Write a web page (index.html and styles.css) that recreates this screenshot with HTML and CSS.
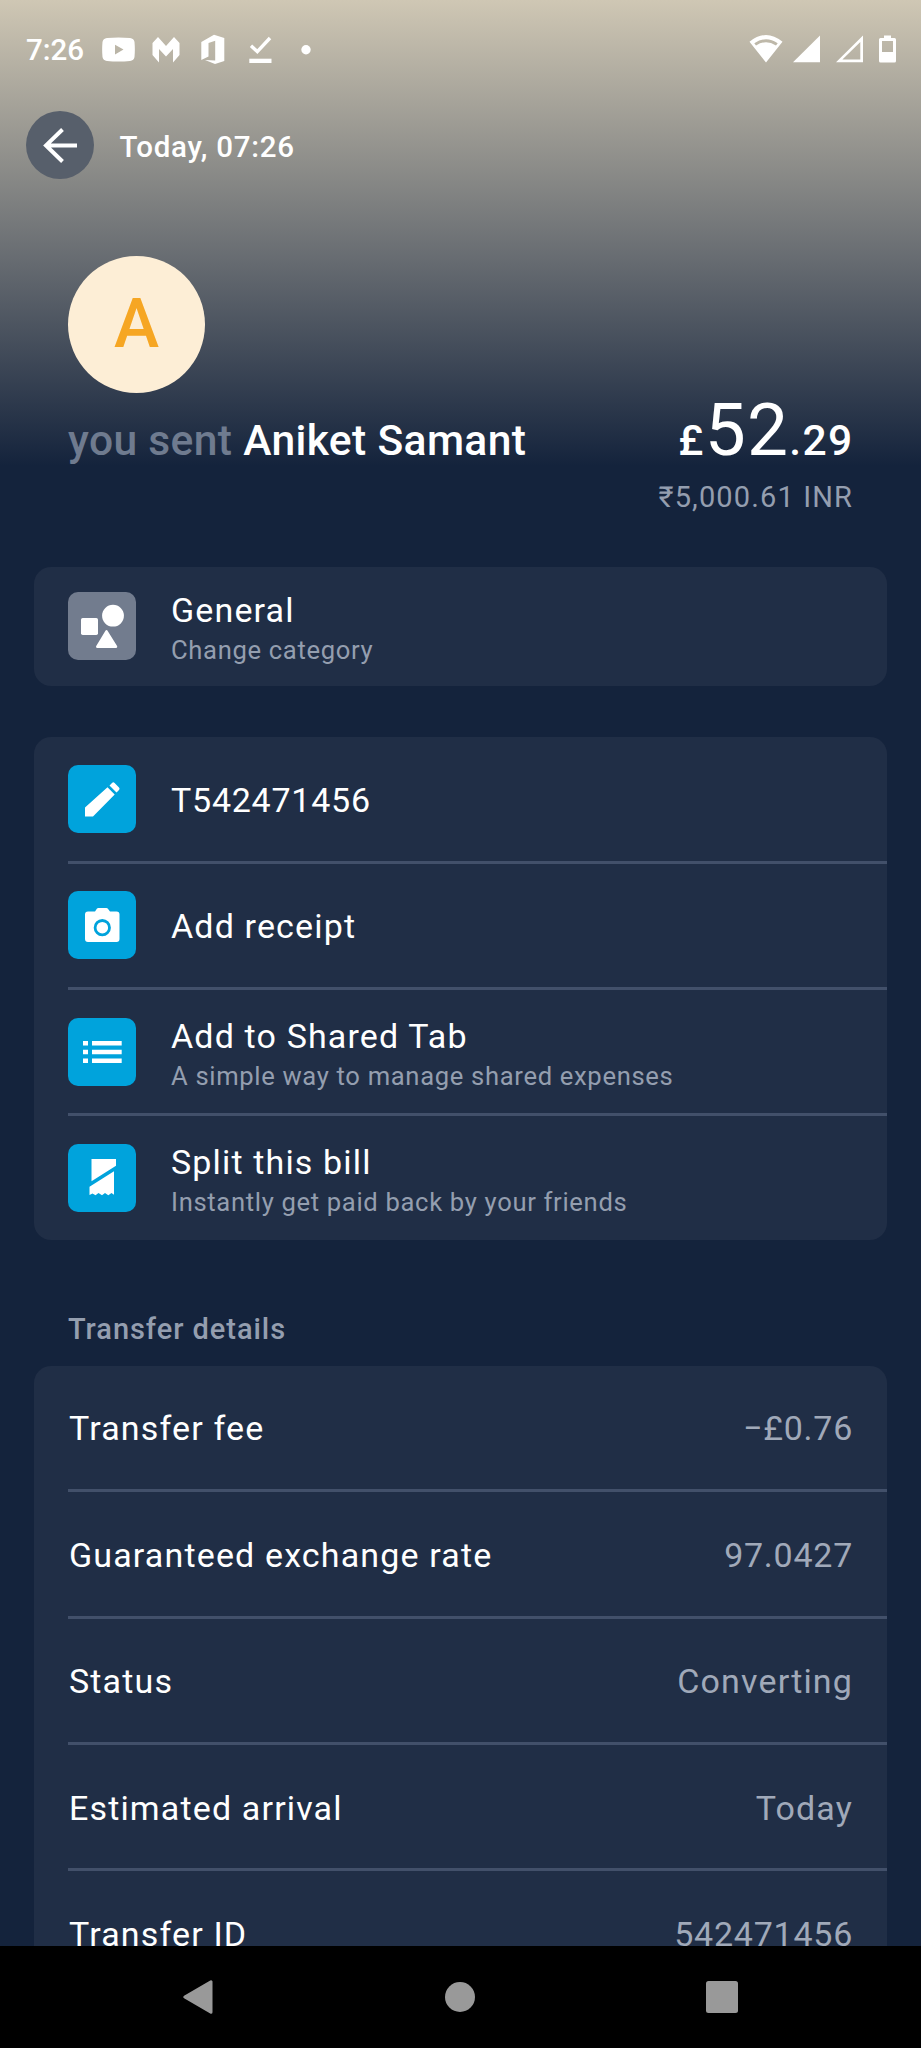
FILE: index.html
```html
<!DOCTYPE html>
<html lang="en">
<head>
<meta charset="utf-8">
<title>Transfer</title>
<link rel="stylesheet" href="styles.css">
</head>
<body>
<div class="screen">
  <main class="content">
    <div class="statusbar">
      <span class="clock">7:26</span>
      <svg class="st-youtube" width="33" height="34" viewBox="0 0 33 34"><path fill="#fff" fill-rule="evenodd" d="M5 5Q16.500 4 28 5Q32 5.500 32.500 9Q33.200 16.500 32.500 24Q32 27.500 28 28Q16.500 29 5 28Q1 27.500 .5 24Q-.2 16.500 .5 9Q1 5.500 5 5ZM13 11.800V21.500L21.500 16.600Z"/></svg>
      <svg class="st-m" width="28" height="34" viewBox="0 0 28 34"><path fill="#fff" d="M6 4L14 13L22 4L27.500 10V22L21 29.500V16L14 23.500L7 16V29.500L.5 22V10Z"/></svg>
      <svg class="st-office" width="24" height="34" viewBox="0 0 24 34"><path fill="#fff" d="M.3 9L13 1.800L23.300 5V28L14 31L4 27L14.200 27.500V7.800L7.500 10V23.500L.3 27Z"/></svg>
      <svg class="st-check" width="23" height="34" viewBox="0 0 23 34"><path fill="none" stroke="#fff" stroke-width="3.400" d="M2 12.800L8.300 18.600L21 5"/><path fill="#fff" d="M.3 25.700H22.500V30H.3Z"/></svg>
      <svg class="st-dot" width="10" height="34" viewBox="0 0 10 34"><circle cx="5" cy="16.700" r="4.700" fill="#fff"/></svg>
      <svg class="st-wifi" width="34" height="34" viewBox="0 0 34 34"><path fill="#fff" fill-rule="evenodd" d="M.5 8.800Q17-4.800 33.500 8.800L17 29.500ZM5.300 10.200L7 12.500Q17 5.800 27 12.500L28.700 10.200Q17 2.200 5.300 10.200Z"/></svg>
      <svg class="st-sig" width="27" height="34" viewBox="0 0 27 34"><path fill="#fff" d="M27 2.500V29.300H0Z"/></svg>
      <svg class="st-sig2" width="27" height="34" viewBox="0 0 27 34"><path fill="#fff" fill-rule="evenodd" d="M27 2.500V29.300H0ZM24.300 9V26.600H6.400Z"/></svg>
      <svg class="st-bat" width="17" height="34" viewBox="0 0 17 34"><path fill="#fff" fill-rule="evenodd" d="M5 2.500H12V5H15.500Q17 5 17 6.500V28Q17 29.500 15.500 29.500H1.500Q0 29.500 0 28V6.500Q0 5 1.500 5H5ZM3 8V19H14V8Z"/></svg>
    </div>

    <header class="topbar">
      <button class="back" aria-label="Back"><svg width="36" height="36" viewBox="0 0 36 36" fill="none" stroke="#fff" stroke-width="4"><path d="M35 18.400H4M20.500 2.500L4 18.400L20.500 34.500"/></svg></button>
      <span class="when">Today, 07:26</span>
    </header>

    <section class="hero">
      <div class="avatar">A</div>
      <div class="summary">
        <div class="who"><span class="dim">you sent</span> Aniket Samant</div>
        <div class="amount">£<span class="big">52</span>.29</div>
      </div>
      <div class="local">₹5,000.61 INR</div>
    </section>

    <section class="card category">
      <div class="row">
        <div class="icon grey"><svg width="68" height="68" viewBox="0 0 68 68" fill="#fff"><circle cx="45" cy="23.700" r="10.900"/><rect x="13" y="26" width="17" height="17" rx="1.700"/><path stroke="#fff" stroke-width="2.500" stroke-linejoin="round" d="M38.500 39.300L48 54.700H29.300Z"/></svg></div>
        <div class="text"><div class="title">General</div><div class="sub">Change category</div></div>
      </div>
    </section>

    <section class="card actions">
      <div class="row">
        <div class="icon"><svg width="68" height="68" viewBox="0 0 68 68" fill="#fff"><path d="M17 51.500V42.500L39.500 22.300L46.700 29.500L25 51.500ZM41.500 20.500L44 18Q45.300 16.700 46.600 18L51 22.400Q52.200 23.600 51 24.900L48.500 27.600Z"/></svg></div>
        <div class="text single"><div class="title num">T542471456</div></div>
      </div>
      <div class="line"></div>
      <div class="row">
        <div class="icon"><svg width="68" height="68" viewBox="0 0 68 68"><path fill="#fff" d="M20 20.500H27L29 17.500Q29.500 17 30.300 17H38.500Q39.200 17 39.700 17.500L42 20.500H48.500Q51.500 20.500 51.500 23.500V48Q51.500 51 48.500 51H20Q17 51 17 48V23.500Q17 20.500 20 20.500Z"/><circle cx="34.300" cy="36.700" r="7.200" fill="none" stroke="#00a3dc" stroke-width="2.800"/></svg></div>
        <div class="text single"><div class="title">Add receipt</div></div>
      </div>
      <div class="line"></div>
      <div class="row">
        <div class="icon"><svg width="68" height="68" viewBox="0 0 68 68" fill="#fff"><path d="M15 23H20V27.500H15ZM24 23H53.700V27.500H24ZM15 31.700H20V36.200H15ZM24 31.700H53.700V36.200H24ZM15 40.400H20V45H15ZM24 40.400H53.700V45H24Z"/></svg></div>
        <div class="text"><div class="title">Add to Shared Tab</div><div class="sub">A simple way to manage shared expenses</div></div>
      </div>
      <div class="line"></div>
      <div class="row">
        <div class="icon"><svg width="68" height="68" viewBox="0 0 68 68" fill="#fff"><path d="M23.500 15H48V21.700L23.500 37.200ZM46 27.300V50.700L43.500 49L40.300 51.300L37 49L34 51.300L30.500 49L27.500 51.300L24.500 49.500L21.500 51V42.700Z"/></svg></div>
        <div class="text"><div class="title">Split this bill</div><div class="sub">Instantly get paid back by your friends</div></div>
      </div>
    </section>

    <h2 class="heading">Transfer details</h2>

    <section class="card details">
      <div class="row"><span class="title">Transfer fee</span><span class="value num">−£0.76</span></div>
      <div class="line"></div>
      <div class="row"><span class="title">Guaranteed exchange rate</span><span class="value num">97.0427</span></div>
      <div class="line"></div>
      <div class="row"><span class="title">Status</span><span class="value">Converting</span></div>
      <div class="line"></div>
      <div class="row"><span class="title">Estimated arrival</span><span class="value">Today</span></div>
      <div class="line"></div>
      <div class="row"><span class="title">Transfer ID</span><span class="value num">542471456</span></div>
    </section>
  </main>

  <nav class="navbar">
    <svg width="34" height="36" viewBox="0 0 34 36"><path fill="#999" stroke="#999" stroke-width="3" stroke-linejoin="round" d="M3.800 18L30 2.700V33.300Z"/></svg>
    <svg width="34" height="36" viewBox="0 0 34 36"><circle cx="17" cy="18" r="15" fill="#999"/></svg>
    <svg width="34" height="36" viewBox="0 0 34 36"><rect x="1" y="2" width="32" height="32" rx="2.500" fill="#999"/></svg>
  </nav>
</div>
</body>
</html>
```
FILE: styles.css
```css
* { box-sizing: border-box; }
body { margin: 0; background: #000; }
svg { display: block; flex: none; }

.screen {
  width: 921px;
  height: 2048px;
  display: flex;
  flex-direction: column;
  overflow: hidden;
  font-family: Roboto, "Noto Sans", sans-serif;
  color: #fff;
}
.content {
  flex: 1;
  min-height: 0;
  overflow: hidden;
  background: #14233c linear-gradient(#cfc7b4, #14233c 466px) no-repeat;
}

/* status bar */
.statusbar {
  height: 111px;
  padding: 33px 25px 0 26px;
  display: flex;
  align-items: flex-start;
}
.clock { width: 76px; font-size: 29.500px; line-height: 34px; font-weight: 500; }
.st-m { margin-left: 17px; }
.st-office { margin-left: 21px; }
.st-check { margin-left: 24px; }
.st-dot { margin-left: 29px; }
.st-wifi { margin-left: auto; }
.st-sig { margin-left: 10px; }
.st-sig2, .st-bat { margin-left: 16px; }

/* top bar */
.topbar { height: 68px; padding-left: 26px; display: flex; align-items: center; }
.back {
  width: 68px;
  height: 68px;
  padding: 0;
  border: 0;
  border-radius: 50%;
  background: #575f6b;
  display: flex;
  align-items: center;
  justify-content: center;
}
.when { margin-left: 25.500px; padding-top: 4px; font-size: 29.500px; font-weight: 500; letter-spacing: .75px; }

/* amount and recipient */
.hero { padding: 77px 68px 0; height: 387.500px; }
.avatar {
  width: 137px;
  height: 137px;
  border-radius: 50%;
  background: #fdeed6;
  color: #f6a623;
  font-size: 68px;
  line-height: 137px;
  font-weight: 500;
  text-align: center;
}
.summary {
  height: 86px;
  display: flex;
  align-items: baseline;
  justify-content: space-between;
  white-space: nowrap;
}
.who, .amount { font-size: 42.600px; font-weight: 500; }
.who { letter-spacing: .34px; }
.who .dim { color: #6f7b8f; }
.amount { line-height: 74px; letter-spacing: 1.300px; margin-right: -.5px; }
.big { font-size: 73px; font-weight: 400; }
.local { text-align: right; font-size: 29px; line-height: 36px; letter-spacing: 1.130px; color: #949eaf; }

/* cards */
.card { margin: 0 34px; border-radius: 17px; background: #202e46; padding-left: 34px; }
.row { height: 123.400px; display: flex; align-items: center; }
.line { height: 3px; background: #42506a; }
.category { height: 119px; }
.category .row { height: 119px; }
.actions { margin-top: 51.700px; }
.icon { width: 68px; height: 68px; flex: none; border-radius: 10px; background: #00a3dc; overflow: hidden; }
.icon.grey { background: #727c8e; }
.text { margin-left: 35px; padding-top: 7px; }
.actions .text { padding-top: 8px; }
.actions .text.single { padding-top: 2px; }
.title, .value { font-size: 34px; line-height: 40px; letter-spacing: 1.150px; }
.title.num, .value.num { letter-spacing: .75px; }
.sub { font-size: 25.600px; line-height: 40px; letter-spacing: .67px; color: #949eaf; }
.heading {
  margin: 0;
  padding: 69.500px 68px 0;
  height: 126px;
  font-size: 29px;
  line-height: 40px;
  font-weight: 500;
  letter-spacing: .95px;
  color: #949eaf;
}
.details .row { justify-content: space-between; padding: 2px 34px 0 1px; }
.value { color: #a0a9b9; }

/* system navigation */
.navbar {
  height: 102.500px;
  background: #000;
  display: flex;
  justify-content: space-between;
  padding: 33.500px 182.500px 0 180.500px;
}
```
